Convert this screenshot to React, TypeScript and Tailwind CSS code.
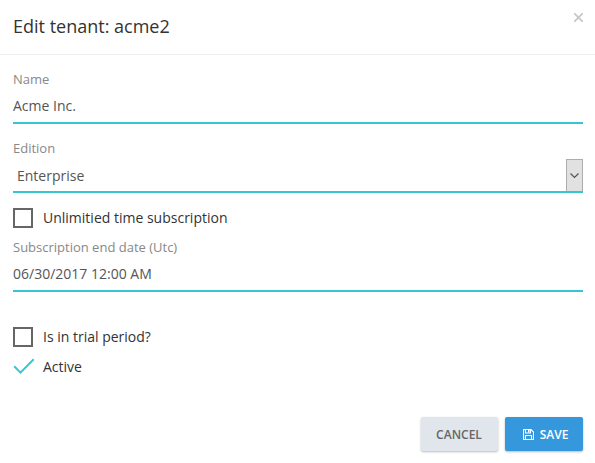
import type { ReactNode } from "react";

function Field({ label, value }: { label: string; value: string }) {
  return (
    <div className="h-[54px] border-b-2 border-[#36c6d3]">
      <div className="h-[18px] text-[13px] leading-[18px] text-[#888888]">{label}</div>
      <div className="h-[34px] text-[14px] leading-[36px] text-[#555555]">{value}</div>
    </div>
  );
}

function Check({ label, checked }: { label: string; checked?: boolean }) {
  return (
    <label className="flex h-5 items-center text-[14px] leading-5 text-[#333333]">
      {checked ? (
        <svg className="h-5 w-[22px]" viewBox="0 0 22 20" fill="none" stroke="#36c6d3" strokeWidth="2">
          <path d="M1.2 9.2l6.3 6.4L20.7 2.2" />
        </svg>
      ) : (
        <span className="mr-0.5 size-5 border-2 border-[#666666]" />
      )}
      <span className="ml-2">{label}</span>
    </label>
  );
}

function Button({ className, children }: { className: string; children: ReactNode }) {
  return (
    <button
      className={`flex h-[34px] items-center justify-center rounded-[2px] text-[12px] font-semibold leading-[18px] shadow-[0_1px_3px_rgba(0,0,0,0.1),0_1px_2px_rgba(0,0,0,0.18)] ${className}`}
    >
      {children}
    </button>
  );
}

export default function App() {
  return (
    <div className="h-[463px] w-[595px] bg-white font-['Open_Sans',sans-serif]">
      <header className="flex h-[55px] justify-between border-b border-[#efefef] pl-[13px] pr-3">
        <h4 className="pt-[13px] text-[18px] leading-[26px] text-[#333333]">Edit tenant: acme2</h4>
        <button className="mt-[13px] size-[9px]" aria-label="Close">
          <svg className="size-[9px]" viewBox="0 0 9 9" stroke="#c5c5c5" strokeWidth="1.6">
            <path d="M0 0l9 9M9 0L0 9" />
          </svg>
        </button>
      </header>
      <main className="px-[13px] pr-3 pt-[15px]">
        <Field label="Name" value="Acme Inc." />
        <div className="mt-[15px] h-[54px] border-b-2 border-[#36c6d3]">
          <div className="h-[18px] text-[13px] leading-[18px] text-[#888888]">Edition</div>
          <div className="flex h-[34px] justify-between pl-1 text-[14px] leading-[38px] text-[#555555]">
            <span>Enterprise</span>
            <span className="mt-0.5 flex h-8 w-[17px] items-center justify-center border border-b-0 border-[#adadad] bg-[#e1e1e1]">
              <svg className="h-[6px] w-[9px]" viewBox="0 0 9 6" fill="none" stroke="#555555" strokeWidth="1.2">
                <path d="M.5 .5l4 4 4-4" />
              </svg>
            </span>
          </div>
        </div>
        <div className="mt-[15px]">
          <Check label="Unlimitied time subscription" />
        </div>
        <div className="mt-[10px]">
          <Field label="Subscription end date (Utc)" value="06/30/2017 12:00 AM" />
        </div>
        <div className="mt-[35px] flex flex-col gap-[10px]">
          <Check label="Is in trial period?" />
          <Check label="Active" checked />
        </div>
      </main>
      <footer className="mt-10 flex justify-end gap-[7px] pr-3">
        <Button className="w-[77px] bg-[#e1e5ec] pr-px pt-0.5 text-[#666666]">CANCEL</Button>
        <Button className="w-[78px] bg-[#3598dc] pl-[3px] pt-0.5 text-white">
          <svg className="mb-0.5 mr-[6px] size-[11px]" viewBox="0 0 11 11" fill="none" stroke="currentColor" strokeWidth="1.1">
            <path d="M.5 .5h7.5l2.5 2.5v7.5H.5zM2.5 10.5v-4h6v4M2.5 .5v3.5h5v-3.5" />
            <path d="M5 1h1.5v2.5H5z" fill="currentColor" stroke="none" />
          </svg>
          <span>SAVE</span>
        </Button>
      </footer>
    </div>
  );
}
